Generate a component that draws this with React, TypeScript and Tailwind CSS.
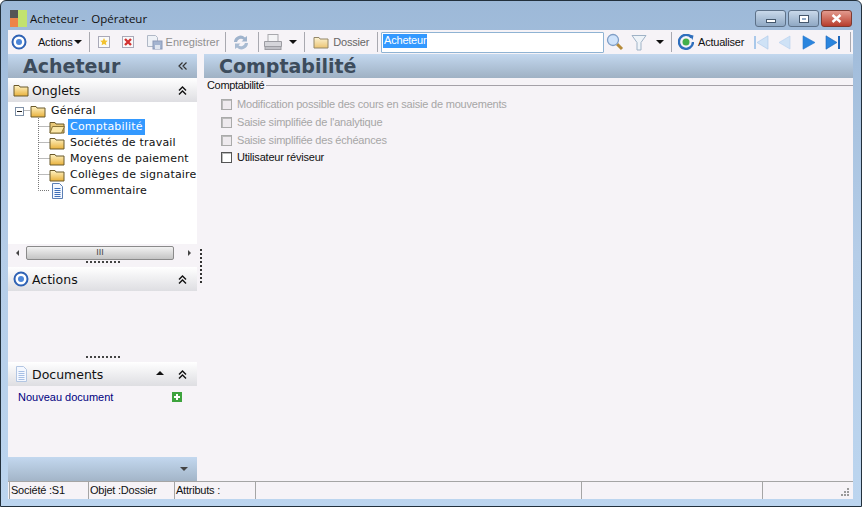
import React from "react";

const Sep = ({ className = "mx-[3px]" }: { className?: string }) => <div className={`w-px h-[20px] bg-[#a9a9b0] shrink-0 ${className}`} />;

const Folder = ({ open = false, className = "" }: { open?: boolean; className?: string }) => (
  <svg width="16" height="14" viewBox="0 0 16 14" className={className}>
    <defs>
      <linearGradient id="fg" x1="0" y1="0" x2="0" y2="1">
        <stop offset="0" stopColor="#fff3c4" />
        <stop offset="1" stopColor="#e8b13c" />
      </linearGradient>
    </defs>
    <path d="M1 2.5h5l1 1.5h8v9H1z" fill={open ? "#e9c878" : "url(#fg)"} stroke="#6b5a2c" strokeWidth="1" />
    {open && <path d="M3.5 6.5h12l-3 6.5H1z" fill="#fbe7a8" stroke="#8a7436" strokeWidth="1" />}
  </svg>
);

const Doc = ({ pale = false }: { pale?: boolean }) => (
  <svg width="15" height="16" viewBox="0 0 15 16">
    <path d="M2.5.5h7l3 3v12h-10z" fill="#f4f8ff" stroke={pale ? "#b3c6e2" : "#5b7fb5"} />
    <path d="M4.5 5.500h6M4.500 7.500h6M4.500 9.500h6M4.500 11.500h6M4.500 13.500h6" stroke={pale ? "#a6bfe4" : "#3f6fb8"} />
  </svg>
);

const Target = ({ size = 16 }: { size?: number }) => (
  <svg width={size} height={size} viewBox="0 0 16 16">
    <circle cx="8" cy="8" r="6.5" fill="#fff" stroke="#2f62b4" strokeWidth="2" />
    <circle cx="8" cy="8" r="3" fill="#4c86d8" />
  </svg>
);

const DoubleUp = () => (
  <svg width="9" height="9" viewBox="0 0 9 9" fill="none" stroke="#111" strokeWidth="1.4">
    <path d="M1 4.5 4.5 1 8 4.5M1 8.5 4.5 5 8 8.5" />
  </svg>
);

const Caret = ({ up = false, color = "#111" }: { up?: boolean; color?: string }) => (
  <svg width="8" height="4" viewBox="0 0 8 4">
    <path d={up ? "M0 4h8L4 0z" : "M0 0h8L4 4z"} fill={color} />
  </svg>
);

const Nav = ({ d, color, edge, bar }: { d: string; color: string; edge: string; bar?: "l" | "r" }) => (
  <svg width="16" height="15" viewBox="0 0 16 15">
    <path d={d} fill={color} stroke={edge} strokeWidth="0.6" />
    {bar === "l" && <rect x="1" y="1" width="2" height="13" fill={edge} />}
    {bar === "r" && <rect x="13" y="1" width="2" height="13" fill={edge} />}
  </svg>
);

const PanelHead = ({ icon, label, extra }: { icon: React.ReactNode; label: string; extra?: React.ReactNode }) => (
  <div className="h-[24px] flex items-center pl-[5px] bg-gradient-to-b from-[#ffffff] to-[#dedee2] shrink-0">
    <div className="w-[16px] flex justify-center shrink-0">{icon}</div>
    <span className="ml-[3px] text-[12.5px] pt-[3px] text-[#111] font-['DejaVu_Sans'] flex-1">{label}</span>
    {extra}
    <div className="w-[10px] mr-[10px] flex justify-center">
      <DoubleUp />
    </div>
  </div>
);

const Check = ({ label, disabled = false }: { label: string; disabled?: boolean }) => (
  <div className="h-[18px] flex items-center">
    <div className={`w-[11px] h-[11px] border ${disabled ? "border-[#aaa] bg-[#eeeaee]" : "border-[#555] bg-white"} shadow-[inset_1px_1px_0_#bbb]`} />
    <span className={`ml-[5px] text-[11px] tracking-[-0.2px] ${disabled ? "text-[#a6a6a6]" : "text-[#111]"}`}>{label}</span>
  </div>
);

const TreeRow = ({ icon, label, active = false }: { icon: React.ReactNode; label: string; active?: boolean }) => (
  <div className="h-[16px] flex items-center pl-[41px]">
    <div className="w-[16px] flex justify-center shrink-0">{icon}</div>
    <span
      className={`ml-[3px] px-[2px] h-[16px] leading-[15px] text-[11px] tracking-[0.2px] whitespace-nowrap font-['DejaVu_Sans'] ${active ? "bg-[#3399ff] text-white" : "text-[#111]"}`}
    >
      {label}
    </span>
  </div>
);

const Dots = () => (
  <div className="h-[6px] flex justify-center items-start shrink-0">
    <div className="w-[34px] border-t-2 border-dotted border-[#444]" />
  </div>
);

const Cell = ({ w, children }: { w: string; children?: React.ReactNode }) => (
  <div className={`${w} h-full border-l border-[#a5a5a5] pl-[1px] flex items-center text-[11px] tracking-[-0.02em] text-[#111] whitespace-nowrap shrink-0`}>
    {children}
  </div>
);

export default function App() {
  return (
    <div className="w-[862px] h-[507px] overflow-hidden flex flex-col rounded-t-[6px] border border-[#22303c] bg-gradient-to-b from-[#9db9d8] via-[#b5cde8] to-[#bcd5ef] font-['Liberation_Sans',sans-serif]">
      {/* title bar */}
      <div className="h-[29px] shrink-0 flex items-start pt-[9px] pl-[9px] pr-[9px]">
        <svg width="17" height="17" viewBox="0 0 17 17">
          <rect width="8" height="8" fill="#555" />
          <rect x="0" y="8" width="8" height="9" fill="#ee8448" />
          <rect x="8" y="0" width="9" height="17" fill="#c2e26e" />
        </svg>
        <span className="ml-[3px] leading-[17px] text-[11.5px] text-[#111] font-['Open_Sans',sans-serif] whitespace-pre flex-1">Acheteur -  Opérateur</span>
        <div className="flex gap-[2px]">
          <div className="w-[31px] h-[17px] rounded-[3px] border border-[#5d7188] bg-gradient-to-b from-[#c9d9ea] to-[#8fa8c4] flex items-center justify-center">
            <div className="w-[10px] h-[4px] mt-[5px] bg-white border border-[#44576c]" />
          </div>
          <div className="w-[31px] h-[17px] rounded-[3px] border border-[#5d7188] bg-gradient-to-b from-[#c9d9ea] to-[#8fa8c4] flex items-center justify-center">
            <div className="w-[10px] h-[8px] bg-white border border-[#44576c] flex items-center justify-center">
              <div className="w-[4px] h-[2px] bg-[#8fa8c4]" />
            </div>
          </div>
          <div className="w-[31px] h-[17px] rounded-[3px] border border-[#7d3a30] bg-gradient-to-b from-[#e29a8e] to-[#b73b2b] flex items-center justify-center">
            <svg width="11" height="9" viewBox="0 0 11 9">
              <path d="M1.5 1 9.5 8M9.5 1 1.5 8" stroke="#fff" strokeWidth="2.4" />
            </svg>
          </div>
        </div>
      </div>

      <div className="flex-1 min-h-0 flex flex-col pl-[7px] pr-[8px]">
        {/* toolbar */}
        <div className="h-[24px] shrink-0 bg-[#f6f3f7] flex items-center text-[11px] tracking-[-0.02em] text-[#111] pl-[3px]">
          <Target />
          <span className="ml-[11px]">Actions</span>
          <span className="ml-[1px] mr-[4px]"><Caret /></span>
          <Sep />
          <div className="ml-[4px] mr-[10px]">
            <svg width="14" height="14" viewBox="0 0 14 14">
              <rect x="1.5" y="1.5" width="11" height="11" fill="#fafafa" stroke="#a9a9b8" />
              <path d="M7 3l1.2 2.4 2.6.4-1.9 1.8.5 2.6L7 9.000l-2.400 1.200.5-2.600L3.200 5.800l2.600-.4z" fill="#f2c230" />
            </svg>
          </div>
          <div>
            <svg width="14" height="14" viewBox="0 0 14 14">
              <rect x="1.500" y="1.500" width="11" height="11" fill="#fafafa" stroke="#a9a9b8" />
              <path d="M4 4l6 6M10 4l-6 6" stroke="#d23232" strokeWidth="2.400" />
            </svg>
          </div>
          <div className="ml-[11px]">
            <svg width="17" height="16" viewBox="0 0 17 16">
              <path d="M1.500 1.500h8l2 2v9h-10z" fill="#eef1f6" stroke="#b0b8c6" />
              <rect x="7" y="7" width="9" height="8" fill="#a4b4d0" stroke="#8b9ab8" />
              <rect x="9" y="11" width="5" height="4" fill="#dfe5ef" />
            </svg>
          </div>
          <span className="ml-[3px] text-[#8f8f8f] tracking-[0px]">Enregistrer</span>
          <Sep className="ml-[6px] mr-[3px]" />
          <div className="ml-[3px]">
            <svg width="18" height="17" viewBox="0 0 18 17">
              <path d="M2 8a6.500 6.500 0 0 1 11-4.500L15 2v5.500h-5.500l2-1.800A4 4 0 0 0 5 8z" fill="#9fb3cc" />
              <path d="M16 9a6.500 6.500 0 0 1-11 4.500L3 15V9.500h5.500l-2 1.800A4 4 0 0 0 13 9z" fill="#a9bbd2" />
            </svg>
          </div>
          <Sep className="ml-[8px] mr-[3px]" />
          <div className="ml-[1px]">
            <svg width="20" height="18" viewBox="0 0 20 18">
              <rect x="5" y="1.500" width="10" height="7" fill="#f4f4f6" stroke="#a9a9ae" />
              <path d="M1.500 8.500h17v5h-17z" fill="#d5d5da" stroke="#9c9ca2" />
              <rect x="2" y="13.500" width="16" height="3" fill="#bfbfc5" stroke="#9c9ca2" />
            </svg>
          </div>
          <span className="ml-[6px] mr-[7px]"><Caret /></span>
          <Sep className="mr-[6px]" />
          <div className="ml-[2px] opacity-70"><Folder /></div>
          <span className="ml-[4px] text-[#666]">Dossier</span>
          <Sep className="ml-[8px] mr-[3px]" />
          <div className="w-[223px] h-[21px] bg-white border border-[#8fb3d3] rounded-[1px] flex items-center pl-[1px] shrink-0">
            <span className="bg-[#3399ff] text-white leading-[13px] h-[14px] -mt-[3px] px-px">Acheteur</span>
          </div>
          <div className="ml-[2px]">
            <svg width="18" height="18" viewBox="0 0 18 18">
              <path d="M11 11l5 5" stroke="#b58a3a" strokeWidth="3" />
              <circle cx="7" cy="7" r="5.500" fill="#cfe3fb" stroke="#7f9ec6" strokeWidth="1.300" />
            </svg>
          </div>
          <div className="ml-[7px]">
            <svg width="16" height="17" viewBox="0 0 16 17">
              <path d="M1 1.500h14L10 8.500v7.500H6V8.500z" fill="#eef3f8" stroke="#9fb2c6" />
            </svg>
          </div>
          <span className="ml-[9px] mr-[7px]"><Caret /></span>
          <Sep className="" />
          <div className="ml-[6px]">
            <svg width="16" height="16" viewBox="0 0 16 16">
              <path d="M13.500 3.500A7 7 0 1 0 15 8" fill="none" stroke="#2f6fbd" strokeWidth="2.400" />
              <path d="M11 .5l4.500 1-1 4.500z" fill="#2f6fbd" />
              <circle cx="8" cy="8" r="3.500" fill="#43b04a" />
            </svg>
          </div>
          <span className="ml-[4px] w-[47px] shrink-0">Actualiser</span>
          <div className="ml-[8px] flex items-center">
            <Nav d="M15 .8V14.200L4 7.500z" color="#cfe2f6" edge="#a9c8ea" bar="l" />
            <div className="ml-[7px]"><Nav d="M14 1V14L3 7.500z" color="#cfe2f6" edge="#b5d0ee" /></div>
            <div className="ml-[9px]"><Nav d="M2 .8V14.200L14 7.500z" color="#2a85de" edge="#2a78cc" /></div>
            <div className="ml-[8px]"><Nav d="M1 .8V14.200L12 7.500z" color="#2a85de" edge="#1f66b8" bar="r" /></div>
          </div>
          <Sep className="ml-[9px]" />
        </div>

        {/* main */}
        <div className="flex-1 min-h-0 flex bg-[#f6f3f7]">
          {/* left */}
          <div className="w-[189px] shrink-0 flex flex-col overflow-hidden">
            <div className="h-[24px] shrink-0 flex items-center bg-gradient-to-b from-[#c3d8ef] to-[#9fb1c4] pl-[15px]">
              <span className="text-[19px] leading-[24px] font-bold text-[#3d4c5c] font-['DejaVu_Sans'] flex-1">Acheteur</span>
              <svg className="mr-[10px]" width="9" height="8" viewBox="0 0 9 8" fill="none" stroke="#333" strokeWidth="1.200">
                <path d="M4.500 .5 1 4l3.500 3.500M8.500 .5 5 4l3.500 3.500" />
              </svg>
            </div>
            <PanelHead icon={<Folder />} label="Onglets" />
            <div className="h-[142px] shrink-0 bg-white relative pt-[1px]">
              <svg className="absolute left-0 top-0" width="60" height="100" fill="none" stroke="#777" strokeDasharray="1 1">
                <path d="M16.500 8.500h6M30.500 16v72.500h11M30.500 24.500h11M30.500 40.500h11M30.500 56.500h11M30.500 72.500h11" />
              </svg>
              <div className="h-[16px] flex items-center pl-[7px] relative">
                <div className="w-[9px] h-[9px] border border-[#7d8fa6] bg-white flex items-center justify-center">
                  <div className="w-[5px] h-px bg-[#222]" />
                </div>
                <div className="ml-[6px]"><Folder /></div>
                <span className="ml-[5px] text-[11px] tracking-[0.2px] text-[#111] font-['DejaVu_Sans']">Général</span>
              </div>
              <div className="relative">
                <TreeRow icon={<Folder open />} label="Comptabilité" active />
                <TreeRow icon={<Folder />} label="Sociétés de travail" />
                <TreeRow icon={<Folder />} label="Moyens de paiement" />
                <TreeRow icon={<Folder />} label="Collèges de signataire" />
                <TreeRow icon={<Doc />} label="Commentaire" />
              </div>
            </div>
            <div className="h-[17px] shrink-0 bg-[#f6f3f7] flex items-center pl-[8px]">
              <svg width="3" height="6" viewBox="0 0 3 6"><path d="M3 0v6L0 3z" fill="#444" /></svg>
              <div className="ml-[7px] w-[148px] h-[14px] border border-[#8a8a8a] rounded-[2px] bg-gradient-to-b from-[#f2f2f2] to-[#c4c4c4] flex items-center justify-center text-[9px] text-[#444] shrink-0">
                III
              </div>
              <svg className="ml-[14px]" width="3" height="6" viewBox="0 0 3 6"><path d="M0 0v6l3-3z" fill="#444" /></svg>
            </div>
            <Dots />
            <PanelHead icon={<Target />} label="Actions" />
            <div className="h-[65px] shrink-0" />
            <Dots />
            <PanelHead
              icon={<Doc pale />}
              label="Documents"
              extra={<span className="mr-[13px] mb-[2px]"><Caret up /></span>}
            />
            <div className="flex-1 min-h-0 px-[10px] pt-[3px] flex items-start justify-between text-[11px] text-[#000080]">
              <span>Nouveau document</span>
              <svg className="mt-[3px] mr-[5px]" width="10" height="10" viewBox="0 0 10 10">
                <rect width="10" height="10" fill="#3ea33e" />
                <path d="M5 2v6M2 5h6" stroke="#fff" strokeWidth="2" />
              </svg>
            </div>
            <div className="h-[24px] shrink-0 bg-gradient-to-b from-[#c3d8ef] to-[#a3b5c8] flex items-center justify-end pr-[9px]">
              <Caret color="#444" />
            </div>
          </div>

          {/* splitter */}
          <div className="w-[7px] shrink-0 pt-[195px]">
            <div className="ml-[3px] h-[34px] border-l-2 border-dotted border-[#333]" />
          </div>

          {/* right */}
          <div className="flex-1 min-w-0 flex flex-col">
            <div className="h-[24px] shrink-0 flex items-center bg-gradient-to-b from-[#c3d8ef] to-[#9fb1c4] pl-[15px]">
              <span className="text-[19px] leading-[24px] font-bold text-[#3d4c5c] font-['DejaVu_Sans']">Comptabilité</span>
            </div>
            <div className="pl-[3px] pt-[1px]">
              <div className="flex items-center h-[13px]">
                <span className="text-[11px] tracking-[-0.03em] text-[#111]">Comptabilité</span>
                <div className="flex-1 ml-[2px] border-t border-[#a5a1a8]" />
              </div>
              <div className="pl-[14px] pt-[3px]">
                <Check disabled label="Modification possible des cours en saisie de mouvements" />
                <Check disabled label="Saisie simplifiée de l'analytique" />
                <Check disabled label="Saisie simplifiée des échéances" />
                <div className="-mt-[1px]"><Check label="Utilisateur réviseur" /></div>
              </div>
            </div>
          </div>
        </div>

        {/* status bar */}
        <div className="h-[18px] shrink-0 bg-[#f6f3f7] border-t border-[#a5a5a5] flex items-stretch pl-[1px]">
          <Cell w="w-[79px]">Société :S1</Cell>
          <Cell w="w-[86px]">Objet :Dossier</Cell>
          <Cell w="w-[81px]">Attributs :</Cell>
          <Cell w="w-[326px]" />
          <Cell w="w-[181px]" />
          <div className="flex-1 border-l border-[#a5a5a5] flex items-end justify-end pr-[3px] pb-[1px]">
            <svg width="10" height="10" viewBox="0 0 10 10" fill="#9a9a9a">
              <rect x="7" y="0" width="2" height="2" />
              <rect x="4" y="3" width="2" height="2" />
              <rect x="7" y="3" width="2" height="2" />
              <rect x="1" y="6" width="2" height="2" />
              <rect x="4" y="6" width="2" height="2" />
              <rect x="7" y="6" width="2" height="2" />
            </svg>
          </div>
        </div>
        <div className="h-[7px] shrink-0" />
      </div>
    </div>
  );
}
